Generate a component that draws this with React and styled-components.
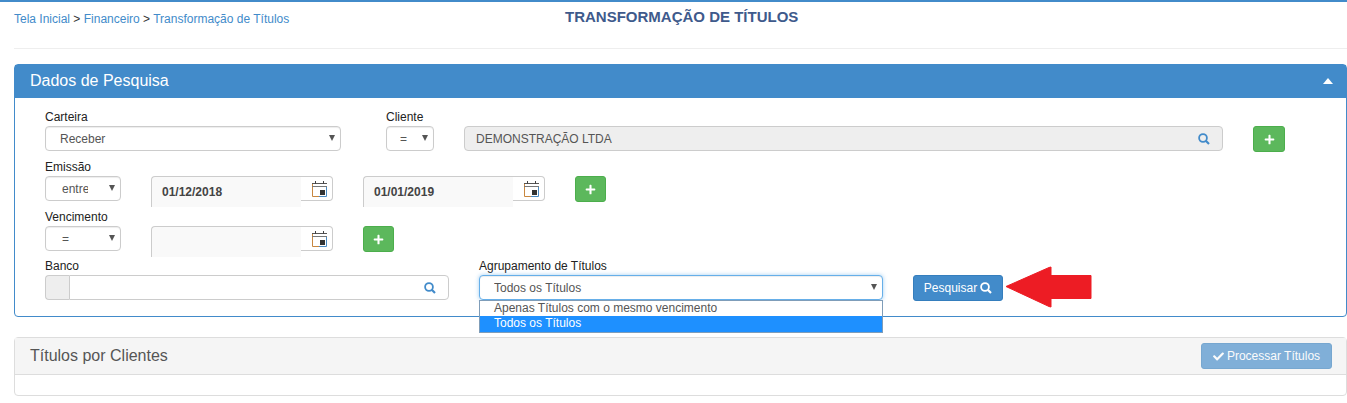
import React from "react";
import styled, { createGlobalStyle } from "styled-components";
import { FaPlus, FaCheck } from "react-icons/fa";

const GlobalStyle = createGlobalStyle`
  html, body {
    margin: 0;
    padding: 0;
    background: #fff;
  }
  body {
    font-family: "Liberation Sans", Arial, sans-serif;
    font-size: 12px;
    color: #333;
  }
  * {
    box-sizing: border-box;
  }
`;

const Page = styled.div`
  border-top: 2px solid #428bca;
  padding-left: 14px;
  height: 401px;
  overflow: hidden;
`;

const Header = styled.header`
  display: flex;
  height: 47px;
  border-bottom: 1px solid #eee;
`;

const Breadcrumb = styled.nav`
  flex: 0 0 551px;
  padding-top: 10px;
  line-height: 15px;
  color: #333;
`;

const Crumb = styled.a`
  color: #428bca;
`;

const Title = styled.h1`
  margin: 0;
  padding-top: 7px;
  font-size: 15px;
  line-height: 16px;
  font-weight: bold;
  color: #3e5a8c;
`;

const Panel = styled.section`
  margin-top: ${(p) => p.$top}px;
  border: 1px solid ${(p) => p.$color};
  border-radius: 4px;
`;

const SearchHead = styled.div`
  display: flex;
  align-items: center;
  justify-content: space-between;
  height: 33px;
  padding: 0 13px 2px 15px;
  background: #428bca;
  color: #fff;
  font-size: 16px;
`;

const SearchBody = styled.div`
  display: flex;
  flex-direction: column;
  height: 218px;
  padding: 12px 0 0 30px;
`;

const Row = styled.div`
  display: flex;
  align-items: flex-start;
  gap: 30px;
  margin-bottom: ${(p) => (p.$tight ? 7 : 8)}px;
`;

const Field = styled.div`
  position: relative;
  display: flex;
  flex-direction: column;
  flex: 0 0 auto;
  width: ${(p) => p.$width}px;
  margin-right: ${(p) => p.$after || 0}px;
`;

const Label = styled.label`
  display: block;
  height: 16px;
  line-height: 14px;
  white-space: nowrap;
  color: #222;
`;

const SelectBox = styled.div`
  position: relative;
  height: 25px;
  padding-left: ${(p) => p.$indent}px;
  padding-right: ${(p) => p.$pad || 30}px;
  border: 1px solid ${(p) => (p.$focus ? "#66afe9" : "#ccc")};
  border-radius: 4px;
  background: #fff;
  box-shadow: ${(p) =>
    p.$focus
      ? "inset 0 1px 1px rgba(0,0,0,.075), 0 0 4px rgba(102,175,233,.6)"
      : "inset 0 1px 1px rgba(0,0,0,.075)"};
  line-height: 24px;
  color: #555;

  &::after {
    content: "";
    position: absolute;
    right: 5px;
    top: 8px;
    border-left: 3px solid transparent;
    border-right: 3px solid transparent;
    border-top: 6px solid #555;
  }
`;

const SelectText = styled.span`
  display: block;
  overflow: hidden;
  white-space: nowrap;
`;

const TextBox = styled.div`
  display: flex;
  align-items: center;
  justify-content: space-between;
  height: 25px;
  padding: 1px 12px 0 11px;
  border: 1px solid #ccc;
  border-radius: 4px;
  background: #eee;
  color: #555;
`;

const LookupGroup = styled.div`
  display: flex;
  height: 25px;
`;

const LookupAddon = styled.span`
  flex: 0 0 24px;
  border: 1px solid #ccc;
  border-right: 0;
  border-radius: 4px 0 0 4px;
  background: #eee;
`;

const LookupInput = styled.div`
  display: flex;
  flex: 1;
  align-items: center;
  justify-content: flex-end;
  padding-right: 12px;
  border: 1px solid #ccc;
  border-radius: 0 4px 4px 0;
  background: #fff;
`;

const DateGroup = styled.div`
  display: flex;
  flex: 0 0 182px;
  height: 25px;
  margin-top: 16px;
`;

const DateInput = styled.div`
  flex: 0 0 150px;
  height: 31px;
  padding: 7px 0 0 10px;
  border-top: 1px solid #ccc;
  border-left: 1px solid #ccc;
  border-radius: 4px 0 0 0;
  background: #f9f9f9;
  font-weight: bold;
  line-height: 16px;
  color: #444;
`;

const DateAddon = styled.span`
  display: flex;
  flex: 1;
  align-items: center;
  padding: 1px 0 0 11px;
  border: 1px solid #ccc;
  border-left: 0;
  border-radius: 0 4px 4px 0;
  background: #fff;
`;

const AddButton = styled.button`
  display: flex;
  flex: 0 0 ${(p) => p.$width || 32}px;
  align-items: center;
  justify-content: center;
  height: 26px;
  margin-top: 16px;
  padding: 0;
  border: 1px solid #4cae4c;
  border-radius: 3px;
  background: #5cb85c;
  color: #fff;
  font-size: 11px;
`;

const Options = styled.ul`
  position: absolute;
  top: 41px;
  left: 0;
  right: 0;
  z-index: 2;
  margin: 0;
  padding: 0;
  border: 1px solid #7f9db9;
  background: #fff;
  list-style: none;
`;

const Option = styled.li`
  height: ${(p) => p.$height}px;
  padding-left: 14px;
  line-height: 14px;
  background: ${(p) => (p.$active ? "#1e90ff" : "#fff")};
  color: ${(p) => (p.$active ? "#fff" : "#555")};
`;

const ActionSlot = styled.div`
  position: relative;
  margin-top: 16px;
`;

const PrimaryButton = styled.button`
  display: flex;
  align-items: center;
  justify-content: center;
  gap: 3px;
  width: ${(p) => p.$width}px;
  height: 26px;
  padding: 0;
  border: 1px solid #357ebd;
  border-radius: 3px;
  background: #428bca;
  color: #fff;
  font-family: inherit;
  font-size: 12px;
  opacity: ${(p) => (p.$disabled ? 0.65 : 1)};
`;

const Arrow = styled.svg`
  position: absolute;
  left: 92px;
  top: -9px;
`;

const ResultsHead = styled.div`
  display: flex;
  align-items: center;
  justify-content: space-between;
  height: 37px;
  padding: 0 14px 0 15px;
  border-bottom: 1px solid #ddd;
  background: #f5f5f5;
  font-size: 16px;
  color: #555;
`;

const ResultsBody = styled.div`
  height: 20px;
`;

function SearchIcon({ color = "#428bca" }) {
  return (
    <svg width="12" height="12" viewBox="0 0 12 12">
      <circle cx="5" cy="5" r="3.9" fill="none" stroke={color} strokeWidth="1.8" />
      <path d="M7.8 7.8L11 11" fill="none" stroke={color} strokeWidth="2.2" />
    </svg>
  );
}

function CalendarIcon() {
  return (
    <svg width="15" height="16" viewBox="0 0 15 16">
      <rect x="0" y="2" width="15" height="14" fill="#fff" />
      <path d="M0.5 2V15.5H7" fill="none" stroke="#c8873f" />
      <path d="M14.5 5V15.5H7" fill="none" stroke="#4a8bc2" />
      <rect x="0" y="2" width="15" height="1" fill="#555" />
      <rect x="0" y="5" width="15" height="1" fill="#777" />
      <rect x="3" y="0" width="1" height="3" fill="#444" />
      <rect x="11" y="0" width="1" height="3" fill="#444" />
      <rect x="8" y="9" width="5" height="5" fill="#333" />
    </svg>
  );
}

function DateField({ value }) {
  return (
    <DateGroup>
      <DateInput>{value}</DateInput>
      <DateAddon>
        <CalendarIcon />
      </DateAddon>
    </DateGroup>
  );
}

function AddBtn({ width }) {
  return (
    <AddButton $width={width}>
      <FaPlus />
    </AddButton>
  );
}

export default function App() {
  return (
    <>
      <GlobalStyle />
      <Page>
        <Header>
          <Breadcrumb>
            <Crumb>Tela Inicial</Crumb> &gt; <Crumb>Financeiro</Crumb> &gt;{" "}
            <Crumb>Transformação de Títulos</Crumb>
          </Breadcrumb>
          <Title>TRANSFORMAÇÃO DE TÍTULOS</Title>
        </Header>

        <Panel $top={15} $color="#428bca">
          <SearchHead>
            Dados de Pesquisa
            <svg width="10" height="6" viewBox="0 0 10 6">
              <path d="M5 0L10 6H0Z" fill="#fff" />
            </svg>
          </SearchHead>
          <SearchBody>
            <Row>
              <Field $width={296} $after={15}>
                <Label>Carteira</Label>
                <SelectBox $indent={14}>
                  <SelectText>Receber</SelectText>
                </SelectBox>
              </Field>
              <Field $width={48}>
                <Label>Cliente</Label>
                <SelectBox $indent={13} $pad={16}>
                  <SelectText>=</SelectText>
                </SelectBox>
              </Field>
              <Field $width={759}>
                <Label />
                <TextBox>
                  DEMONSTRAÇÃO LTDA
                  <SearchIcon />
                </TextBox>
              </Field>
              <AddBtn />
            </Row>

            <Row>
              <Field $width={76}>
                <Label>Emissão</Label>
                <SelectBox $indent={16} $pad={32}>
                  <SelectText>entre</SelectText>
                </SelectBox>
              </Field>
              <DateField value="01/12/2018" />
              <DateField value="01/01/2019" />
              <AddBtn width={31} />
            </Row>

            <Row $tight>
              <Field $width={76}>
                <Label>Vencimento</Label>
                <SelectBox $indent={16}>
                  <SelectText>=</SelectText>
                </SelectBox>
              </Field>
              <DateField />
              <AddBtn width={31} />
            </Row>

            <Row>
              <Field $width={404}>
                <Label>Banco</Label>
                <LookupGroup>
                  <LookupAddon />
                  <LookupInput>
                    <SearchIcon />
                  </LookupInput>
                </LookupGroup>
              </Field>
              <Field $width={404}>
                <Label>Agrupamento de Títulos</Label>
                <SelectBox $indent={14} $focus>
                  <SelectText>Todos os Títulos</SelectText>
                </SelectBox>
                <Options>
                  <Option $height={15}>Apenas Títulos com o mesmo vencimento</Option>
                  <Option $height={16} $active>
                    Todos os Títulos
                  </Option>
                </Options>
              </Field>
              <ActionSlot>
                <PrimaryButton $width={90}>
                  Pesquisar <SearchIcon color="#fff" />
                </PrimaryButton>
                <Arrow width="88" height="43" viewBox="0 0 88 43">
                  <path
                    d="M1 20.5L44 1.5L46 1V9.5H86V32.5H46V41L44 40.5Z"
                    fill="#ed1c24"
                    stroke="#ed1c24"
                    strokeLinejoin="round"
                  />
                </Arrow>
              </ActionSlot>
            </Row>
          </SearchBody>
        </Panel>

        <Panel $top={20} $color="#ddd">
          <ResultsHead>
            Títulos por Clientes
            <PrimaryButton $width={131} $disabled>
              <FaCheck size={11} /> Processar Títulos
            </PrimaryButton>
          </ResultsHead>
          <ResultsBody />
        </Panel>
      </Page>
    </>
  );
}
